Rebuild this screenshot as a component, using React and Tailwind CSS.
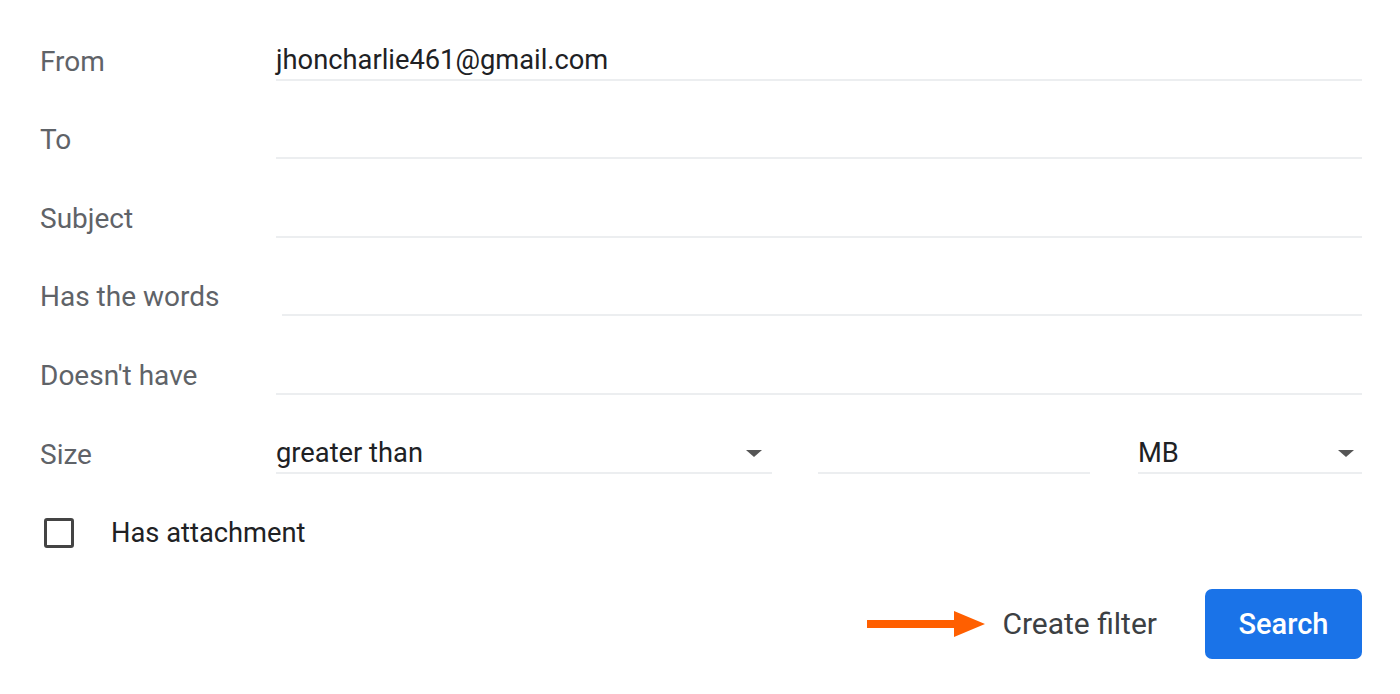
import React from 'react';

const FONT = { fontFamily: 'Roboto, "Liberation Sans", sans-serif' };

function Caret() {
  return (
    <svg width="18" height="9" viewBox="0 0 18 9" className="shrink-0">
      <path d="M1 1h16L9 8z" fill="#555" />
    </svg>
  );
}

function Row({ label, children }) {
  return (
    <div className="flex items-end h-[78.6px]">
      <div className="w-[236px] h-[38px] flex items-center text-[#5f6368] text-[28px]">{label}</div>
      {children}
    </div>
  );
}

function Field({ value, className = '' }) {
  return (
    <div className={`flex-1 h-[38px] flex items-center border-b-2 border-[#eceef0] text-[#202124] ${className}`}>
      {value}
    </div>
  );
}

export default function App() {
  return (
    <div className="w-[1400px] h-[694px] bg-white pt-[2px] pl-[40px] pr-[38px] text-[27.3px] leading-none" style={FONT}>
      <Row label="From">
        <Field value="jhoncharlie461@gmail.com" />
      </Row>
      <Row label="To">
        <Field />
      </Row>
      <Row label="Subject">
        <Field />
      </Row>
      <Row label="Has the words">
        <Field className="ml-[6px]" />
      </Row>
      <Row label="Doesn't have">
        <Field />
      </Row>
      <Row label="Size">
        <div className="flex-1 flex items-end">
          <div className="w-[496px] h-[38px] flex items-center justify-between pr-[9px] border-b-2 border-[#eceef0] text-[#202124]">
            <span>greater than</span>
            <Caret />
          </div>
          <div className="w-[272px] ml-[46px] h-[38px] border-b-2 border-[#eceef0]" />
          <div className="flex-1 ml-[48px] h-[38px] flex items-center justify-between pr-[7px] border-b-2 border-[#eceef0] text-[#202124]">
            <span>MB</span>
            <Caret />
          </div>
        </div>
      </Row>
      <div className="flex items-end h-[78.6px]">
        <div className="h-[38px] flex items-center">
          <div className="w-[30px] h-[30px] ml-[4px] border-[3px] border-[#444] rounded-[3px]" />
          <span className="ml-[37px] text-[#202124]">Has attachment</span>
        </div>
      </div>
      <div className="flex items-center justify-end mt-[37px]">
        <svg width="120" height="28" viewBox="0 0 120 28" className="mr-[15px]">
          <path d="M0 10h87V1l31 13-31 13v-9H0z" fill="#ff5f00" />
        </svg>
        <span className="text-[#3c4043] text-[30px] mr-[48px]">Create filter</span>
        <button className="w-[157px] h-[70px] rounded-[7px] bg-[#1a73e8] text-white text-[29px] font-medium">Search</button>
      </div>
    </div>
  );
}
